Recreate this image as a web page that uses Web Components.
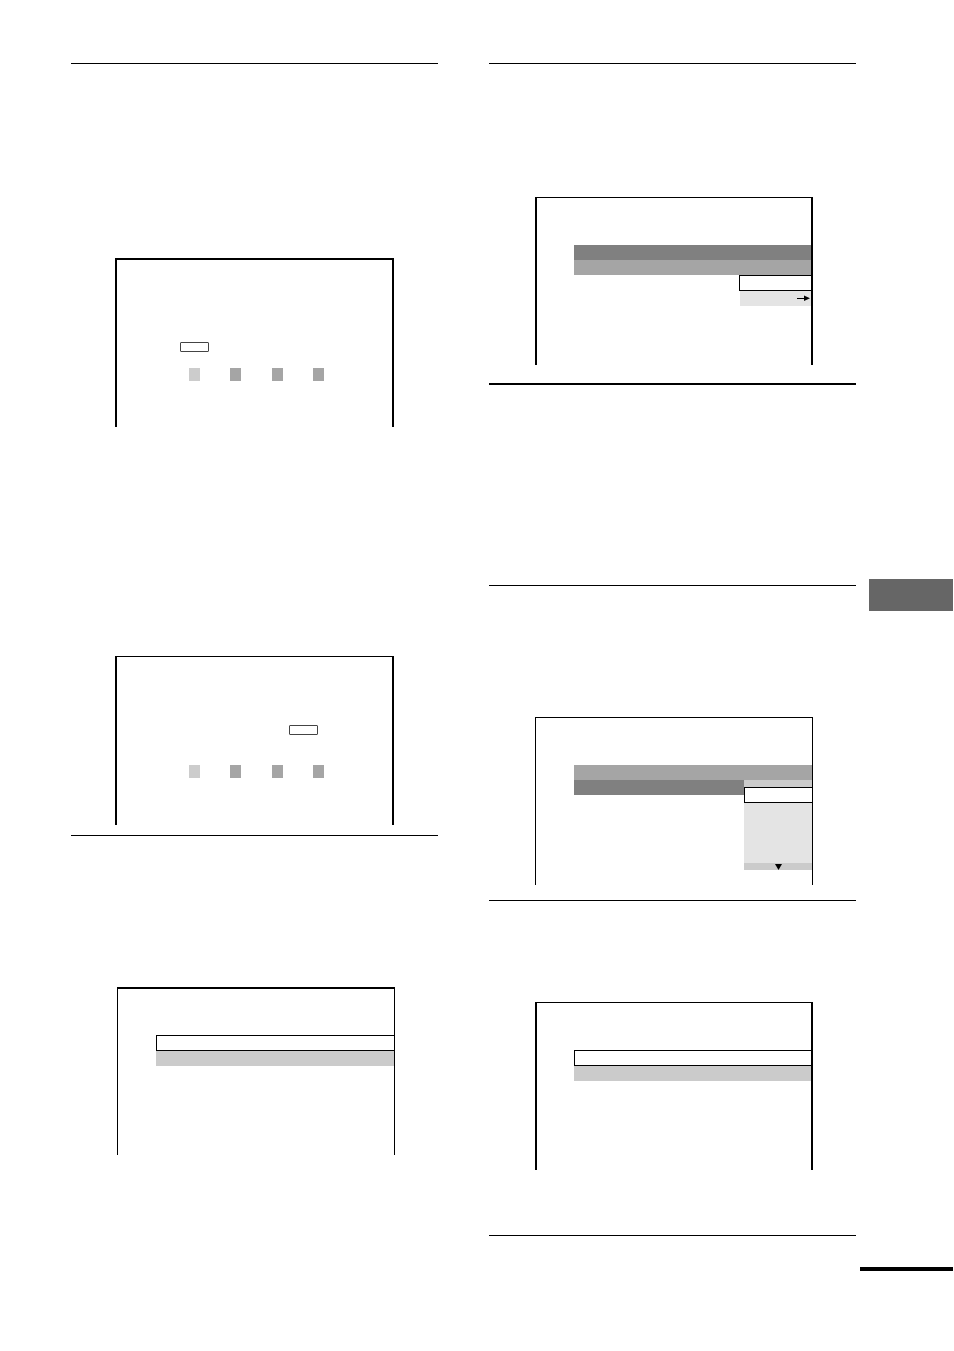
<!DOCTYPE html>
<html lang="en">
<head>
<meta charset="utf-8">
<meta name="viewport" content="width=device-width, initial-scale=1">
<title>Manual page</title>
<style>
  html, body { margin: 0; background: #fff; }
  body { font-family: "Liberation Sans", Arial, sans-serif; color: #000; }
</style>
</head>
<body>
<manual-page>
  <manual-column slot="left">
    <manual-section style="--lead: 194px; --space: 772px; --gap: 229px">
      <tv-screen frame="heavy"><jog-counter style="--top: 82px; --indent: 63px; --gap: 16px"></jog-counter></tv-screen>
      <tv-screen frame="sides"><jog-counter style="--top: 68px; --indent: 172px; --gap: 30px"></jog-counter></tv-screen>
    </manual-section>
    <manual-section style="--lead: 151px">
      <tv-screen kind="menu" frame="top">
        <menu-row tone="selected"></menu-row>
        <menu-row tone="idle"></menu-row>
      </tv-screen>
    </manual-section>
  </manual-column>

  <manual-column slot="right">
    <manual-section style="--lead: 133px; --space: 320px">
      <tv-screen kind="menu" frame="sides">
        <menu-row tone="dark"></menu-row>
        <menu-row tone="mid"></menu-row>
        <option-list more="right"></option-list>
      </tv-screen>
    </manual-section>
    <manual-section style="--rule: 2px; --space: 202px"></manual-section>
    <manual-section style="--lead: 131px; --space: 315px">
      <tv-screen kind="menu">
        <menu-row tone="mid"></menu-row>
        <menu-row tone="dark"><option-list more="down"></option-list></menu-row>
      </tv-screen>
    </manual-section>
    <manual-section style="--lead: 101px; --space: 335px">
      <tv-screen kind="menu" frame="sides">
        <menu-row tone="selected"></menu-row>
        <menu-row tone="idle"></menu-row>
      </tv-screen>
    </manual-section>
    <manual-section></manual-section>
  </manual-column>

  <page-margin slot="margin"></page-margin>
</manual-page>

<script>
class ManualPage extends HTMLElement {
  constructor() {
    super();
    this.attachShadow({ mode: "open" });
    this.shadowRoot.innerHTML = `
      <style>
        :host { display: block; }
        main {
          display: flex;
          box-sizing: border-box;
          min-height: 100vh;
          padding: 0 1px 0 71px;
        }
        .columns { flex: 1; display: grid; grid-template-columns: 1fr 1fr; gap: 51px; padding-top: 63px; }
        aside { display: flex; flex: 0 0 93px; margin-left: 4px; }
      </style>
      <main>
        <div class="columns">
          <slot name="left"></slot>
          <slot name="right"></slot>
        </div>
        <aside><slot name="margin"></slot></aside>
      </main>
    `;
  }
}

class ManualColumn extends HTMLElement {
  constructor() {
    super();
    this.attachShadow({ mode: "open" });
    this.shadowRoot.innerHTML = `
      <style>
        :host { display: flex; flex-direction: column; min-width: 0; }
      </style>
      <slot></slot>
    `;
  }
}

// One block of the page, opened by a horizontal rule.
class ManualSection extends HTMLElement {
  constructor() {
    super();
    this.attachShadow({ mode: "open" });
    this.shadowRoot.innerHTML = `
      <style>
        :host {
          display: flex;
          flex-direction: column;
          gap: var(--gap, 0);
          box-sizing: border-box;
          min-height: var(--space, 1px);
          padding-top: var(--lead, 0);
          border-top: var(--rule, 1px) solid #000;
        }
      </style>
      <slot></slot>
    `;
  }
}

// TV picture, open at the bottom.
class TvScreen extends HTMLElement {
  constructor() {
    super();
    this.attachShadow({ mode: "open" });
    this.shadowRoot.innerHTML = `
      <style>
        :host {
          display: flex;
          flex-direction: column;
          box-sizing: border-box;
          min-height: 169px;
          margin: 0 44px;
          border: solid #000;
          border-width: 1px 1px 0;
        }
        :host([frame="heavy"]) { border-width: 2px 2px 0; }
        :host([frame="sides"]) { border-width: 1px 2px 0; }
        :host([frame="top"]) { border-width: 2px 1px 0; }
        :host([kind="menu"]) {
          min-height: 168px;
          margin: 0 43px 0 46px;
          padding: 47px 0 0 38px;
        }
        :host([kind="menu"][frame="top"]) { padding-top: 46px; }
        :host([kind="menu"][frame="sides"]) { padding-left: 37px; }
      </style>
      <slot></slot>
    `;
  }
}

class JogCounter extends HTMLElement {
  constructor() {
    super();
    this.attachShadow({ mode: "open" });
    this.shadowRoot.innerHTML = `
      <style>
        :host { display: flex; flex-direction: column; gap: var(--gap); padding-top: var(--top); }
        .field {
          box-sizing: border-box;
          width: 29px;
          height: 10px;
          margin-left: var(--indent);
          border: 1px solid #444;
          border-radius: 1px;
        }
        .digits { display: flex; justify-content: space-between; width: 135px; margin-left: 72px; }
        .digits span { width: 11px; height: 13px; background: #a5a5a5; }
        .digits span:first-child { background: #ccc; }
      </style>
      <div class="field"></div>
      <div class="digits"><span></span><span></span><span></span><span></span></div>
    `;
  }
}

class MenuRow extends HTMLElement {
  constructor() {
    super();
    this.attachShadow({ mode: "open" });
    this.shadowRoot.innerHTML = `
      <style>
        :host { display: flex; align-items: flex-start; height: 15px; }
        .bar { flex: 1; box-sizing: border-box; height: 100%; }
        :host([tone="dark"]) .bar { background: #808080; }
        :host([tone="mid"]) .bar { background: #a5a5a5; }
        :host([tone="idle"]) .bar { background: #cbcbcb; }
        :host([tone="selected"]) { height: 16px; }
        :host([tone="selected"]) .bar { border: solid #000; border-width: 1px 0 1px 1px; }
      </style>
      <div class="bar"></div>
      <slot></slot>
    `;
  }
}

// Drop-down of a menu row: "right" leads to another menu, "down" scrolls.
class OptionList extends HTMLElement {
  constructor() {
    super();
    this.attachShadow({ mode: "open" });
  }

  connectedCallback() { this.render(); }

  render() {
    const down = this.getAttribute("more") === "down";
    this.shadowRoot.innerHTML = `
      <style>
        :host { display: block; width: 72px; align-self: flex-end; }
        :host([more="down"]) { width: 68px; align-self: flex-start; }
        .cap { display: flex; justify-content: center; height: 7px; background: #cbcbcb; }
        .current { box-sizing: border-box; height: 16px; border: solid #000; border-width: 1px 0 1px 1px; background: #fff; }
        .rest { display: flex; justify-content: flex-end; height: 15px; margin-left: 1px; background: #e4e4e4; }
        :host([more="down"]) .rest { height: 60px; margin-left: 0; }
        svg { display: block; }
      </style>
      ${down ? `<div class="cap"></div>` : ""}
      <div class="current"></div>
      <div class="rest">
        ${down ? "" : `<svg width="14" height="15" viewBox="0 0 14 15" aria-hidden="true">
          <path d="M0 7h8v1H0z"/><path d="M7 4.500L13 7.200L7 10z"/>
        </svg>`}
      </div>
      ${down ? `<div class="cap"><svg width="7" height="7" viewBox="0 0 7 7" aria-hidden="true"><path d="M0 1h7L3.500 7z"/></svg></div>` : ""}
    `;
  }
}

// Outer edge of the page: chapter tab and the bar under the page number.
class PageMargin extends HTMLElement {
  constructor() {
    super();
    this.attachShadow({ mode: "open" });
    this.shadowRoot.innerHTML = `
      <style>
        :host { flex: 1; display: flex; flex-direction: column; justify-content: space-between; padding: 579px 0 80px; }
        .tab { height: 32px; margin-left: 9px; background: #666; }
        .bar { height: 4px; background: #000; }
      </style>
      <div class="tab"></div>
      <div class="bar"></div>
    `;
  }
}

customElements.define("manual-page", ManualPage);
customElements.define("manual-column", ManualColumn);
customElements.define("manual-section", ManualSection);
customElements.define("tv-screen", TvScreen);
customElements.define("jog-counter", JogCounter);
customElements.define("menu-row", MenuRow);
customElements.define("option-list", OptionList);
customElements.define("page-margin", PageMargin);
</script>
</body>
</html>
